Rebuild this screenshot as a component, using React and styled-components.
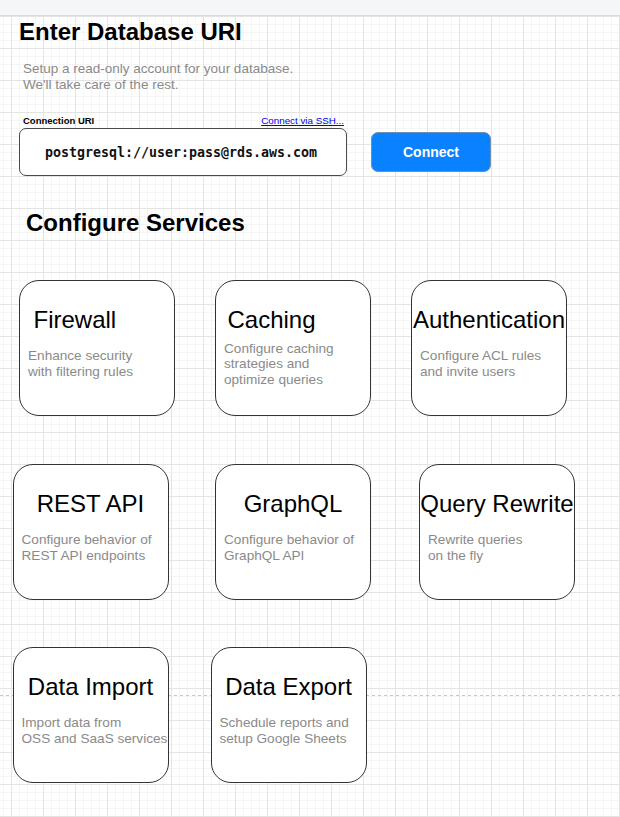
import React from "react";
import { styled, createGlobalStyle } from "styled-components";

const GlobalStyle = createGlobalStyle`
  html, body {
    margin: 0;
    padding: 0;
    font-family: "Liberation Sans", Arial, Helvetica, sans-serif;
  }
  * {
    box-sizing: border-box;
  }
`;

const Page = styled.div`
  width: 620px;
  min-height: 100vh;
  display: flex;
  flex-direction: column;
  overflow: hidden;
`;

const TopBar = styled.div`
  height: 16px;
  background-color: #f5f6f8;
  border-bottom: 1px solid #dadbdd;
`;

const Canvas = styled.div`
  flex: 1;
  background-color: #ffffff;
  background-image: repeating-linear-gradient(
      to right,
      #c6c6c6 0 3px,
      transparent 3px 6px
    ),
    linear-gradient(to right, #e4e4e4 1px, transparent 1px),
    linear-gradient(to bottom, #e4e4e4 1px, transparent 1px),
    linear-gradient(to right, #f5f5f5 1px, transparent 1px),
    linear-gradient(to bottom, #f5f5f5 1px, transparent 1px);
  background-size: 100% 1px, 32px 32px, 32px 32px, 8px 8px, 8px 8px;
  background-position: 0 679px, 11px 0, 0 0, 3px 0, 0 0;
  background-repeat: no-repeat, repeat, repeat, repeat, repeat;
  padding-bottom: 30px;
`;

const Heading = styled.h1`
  margin: ${(p) => p.$top}px 0 0 ${(p) => p.$left}px;
  font-size: 24px;
  line-height: 28px;
  font-weight: 700;
  color: #000000;
`;

const Subtitle = styled.p`
  margin: 15px 0 0 23px;
  font-size: 13.5px;
  line-height: 16px;
  color: #8a8a8a;
`;

const ConnectRow = styled.div`
  display: flex;
  align-items: flex-end;
  margin: 22px 0 0 19px;
`;

const Field = styled.div`
  width: 328px;
  display: flex;
  flex-direction: column;
`;

const LabelRow = styled.div`
  display: flex;
  justify-content: space-between;
  align-items: baseline;
  padding: 0 3px 0 4px;
  height: 12px;
  line-height: 12px;
  font-size: 9.5px;
`;

const Label = styled.span`
  font-weight: 700;
  color: #000000;
`;

const SshLink = styled.a`
  color: #0000ee;
  font-size: 9.8px;
  text-decoration: underline;
  cursor: pointer;
`;

const UriBox = styled.div`
  margin-top: 1px;
  height: 48px;
  display: flex;
  align-items: center;
  justify-content: center;
  padding-right: 4px;
  background: #ffffff;
  border: 1px solid #4a4a4a;
  border-radius: 7px;
  font-family: "DejaVu Sans Mono", "Liberation Mono", monospace;
  font-weight: 700;
  font-size: 13.3px;
  color: #111111;
`;

const ConnectButton = styled.button`
  margin: 0 0 4px 24px;
  width: 120px;
  height: 40px;
  border: 1px solid #6f8fb8;
  border-radius: 7px;
  background: #0a82ff;
  color: #ffffff;
  font-family: "Liberation Sans", Arial, sans-serif;
  font-weight: 700;
  font-size: 14px;
  cursor: pointer;
`;

const CardRow = styled.div`
  display: flex;
  margin: ${(p) => p.$top}px 0 0 ${(p) => p.$left}px;
`;

const Card = styled.div`
  flex: none;
  width: 156px;
  height: 136px;
  margin-left: ${(p) => p.$gap || 0}px;
  background: #ffffff;
  border: 1px solid #333333;
  border-radius: 20px;
  padding-top: 25px;
  display: flex;
  flex-direction: column;
`;

const CardTitle = styled.div`
  height: 28px;
  line-height: 28px;
  font-size: 24px;
  color: #000000;
  white-space: nowrap;
  text-align: ${(p) => (p.$indent != null ? "left" : "center")};
  padding-left: ${(p) => p.$indent || 0}px;
`;

const CardDesc = styled.div`
  margin-top: 6px;
  height: 48px;
  display: flex;
  flex-direction: column;
  justify-content: center;
  padding-left: 8px;
  font-size: 13.6px;
  line-height: 15.6px;
  color: #8a8a8a;
  white-space: nowrap;
`;

function ServiceCard({ title, lines, indent, gap }) {
  return (
    <Card $gap={gap}>
      <CardTitle $indent={indent}>{title}</CardTitle>
      <CardDesc>
        {lines.map((line) => (
          <span key={line}>{line}</span>
        ))}
      </CardDesc>
    </Card>
  );
}

export default function App() {
  return (
    <>
      <GlobalStyle />
      <Page>
        <TopBar />
        <Canvas>
          <Heading $top={2} $left={19}>
            Enter Database URI
          </Heading>
          <Subtitle>
            Setup a read-only account for your database.
            <br />
            We'll take care of the rest.
          </Subtitle>
          <ConnectRow>
            <Field>
              <LabelRow>
                <Label>Connection URI</Label>
                <SshLink>Connect via SSH...</SshLink>
              </LabelRow>
              <UriBox>postgresql://user:pass@rds.aws.com</UriBox>
            </Field>
            <ConnectButton>Connect</ConnectButton>
          </ConnectRow>
          <Heading $top={33} $left={26}>
            Configure Services
          </Heading>

          <CardRow $top={43} $left={19}>
            <ServiceCard
              title="Firewall"
              indent={13.5}
              lines={["Enhance security", "with filtering rules"]}
            />
            <ServiceCard
              gap={40}
              title="Caching"
              indent={11.5}
              lines={["Configure caching", "strategies and", "optimize queries"]}
            />
            <ServiceCard
              gap={40}
              title="Authentication"
              lines={["Configure ACL rules", "and invite users"]}
            />
          </CardRow>

          <CardRow $top={48} $left={12.5}>
            <ServiceCard
              title="REST API"
              lines={["Configure behavior of", "REST API endpoints"]}
            />
            <ServiceCard
              gap={46.5}
              title="GraphQL"
              lines={["Configure behavior of", "GraphQL API"]}
            />
            <ServiceCard
              gap={48}
              title="Query Rewrite"
              lines={["Rewrite queries", "on the fly"]}
            />
          </CardRow>

          <CardRow $top={47} $left={12.5}>
            <ServiceCard
              title="Data Import"
              lines={["Import data from", "OSS and SaaS services"]}
            />
            <ServiceCard
              gap={42}
              title="Data Export"
              lines={["Schedule reports and", "setup Google Sheets"]}
            />
          </CardRow>
        </Canvas>
      </Page>
    </>
  );
}
